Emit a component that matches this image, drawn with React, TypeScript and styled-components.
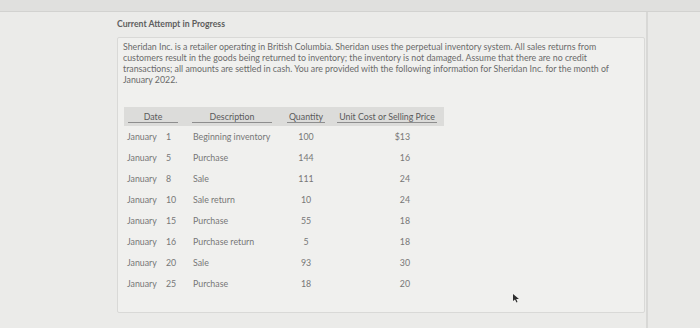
import { createGlobalStyle, styled } from 'styled-components';

const GlobalStyle = createGlobalStyle`
  html, body {
    margin: 0;
    padding: 0;
    background: #e8e8e6;
    font-family: Lato, "Open Sans", sans-serif;
    color: #6c6c6c;
  }
`;

const Screen = styled.div`
  width: 700px;
  height: 328px;
  display: flex;
  flex-direction: column;
  overflow: hidden;
`;

const TopBar = styled.div`
  height: 11px;
  background: #e0e0de;
  border-bottom: 1px solid #d2d2d0;
`;

const Body = styled.div`
  flex: 1;
  display: flex;
`;

const Main = styled.div`
  width: 648px;
  box-sizing: border-box;
  padding: 5px 1px 0 117px;
  background: #ebebe9;
  border-right: 2px solid #d8d8d6;
`;

const Side = styled.div`
  flex: 1;
  background: #e9e9e7;
`;

const Heading = styled.div`
  font-size: 8.7px;
  font-weight: bold;
  color: #5e5e5e;
  height: 14px;
  line-height: 14px;
  margin-bottom: 6px;
`;

const Card = styled.div`
  border: 1px solid #d9d9d7;
  border-radius: 2px;
  background: #f0f0ee;
  height: 276px;
  box-sizing: border-box;
  padding: 3px 10px 0 5px;
`;

const Intro = styled.p`
  margin: 0 0 22px;
  font-size: 8.8px;
  line-height: 11px;
  white-space: nowrap;
  color: #6a6a6a;
`;

const Table = styled.div`
  width: 320px;
  margin-left: 1px;
`;

const columns = '58px 100px 48px 114px';

const HeadRow = styled.div`
  display: grid;
  grid-template-columns: ${columns};
  height: 19px;
  align-items: center;
  background: #dcdcda;
`;

const HeadCell = styled.div<{ $w: number }>`
  display: flex;
  justify-content: center;
  span {
    display: inline-block;
    width: ${(p) => p.$w}px;
    text-align: center;
    font-size: 8.8px;
    line-height: 11px;
    white-space: nowrap;
    color: #5a5a5a;
    border-bottom: 1px solid #8e8e8e;
  }
`;

const Row = styled.div`
  display: grid;
  grid-template-columns: ${columns};
  height: 21px;
  align-items: center;
  font-size: 8.8px;
  color: #777;
`;

const DateCell = styled.div`
  display: flex;
  padding-left: 3px;
  span:first-child {
    width: 39px;
  }
`;

const DescCell = styled.div`
  padding-left: 11px;
  white-space: nowrap;
`;

const QtyCell = styled.div`
  text-align: center;
`;

const PriceCell = styled.div`
  text-align: right;
  padding-right: 34px;
`;

const Cursor = styled.svg`
  position: absolute;
  left: 512px;
  top: 293px;
`;

const rows = [
  ['January', '1', 'Beginning inventory', '100', '$13'],
  ['January', '5', 'Purchase', '144', '16'],
  ['January', '8', 'Sale', '111', '24'],
  ['January', '10', 'Sale return', '10', '24'],
  ['January', '15', 'Purchase', '55', '18'],
  ['January', '16', 'Purchase return', '5', '18'],
  ['January', '20', 'Sale', '93', '30'],
  ['January', '25', 'Purchase', '18', '20'],
];

export default function App() {
  return (
    <Screen>
      <GlobalStyle />
      <TopBar />
      <Body>
        <Main>
          <Heading>Current Attempt in Progress</Heading>
          <Card>
            <Intro>
              Sheridan Inc. is a retailer operating in British Columbia. Sheridan uses the perpetual inventory system. All sales returns from
              <br />
              customers result in the goods being returned to inventory; the inventory is not damaged. Assume that there are no credit
              <br />
              transactions; all amounts are settled in cash. You are provided with the following information for Sheridan Inc. for the month of
              <br />
              January 2022.
            </Intro>
            <Table>
              <HeadRow>
                <HeadCell $w={50}><span>Date</span></HeadCell>
                <HeadCell $w={80}><span>Description</span></HeadCell>
                <HeadCell $w={38}><span>Quantity</span></HeadCell>
                <HeadCell $w={100}><span>Unit Cost or Selling Price</span></HeadCell>
              </HeadRow>
              {rows.map((r) => (
                <Row key={r[0] + r[1]}>
                  <DateCell>
                    <span>{r[0]}</span>
                    <span>{r[1]}</span>
                  </DateCell>
                  <DescCell>{r[2]}</DescCell>
                  <QtyCell>{r[3]}</QtyCell>
                  <PriceCell>{r[4]}</PriceCell>
                </Row>
              ))}
            </Table>
          </Card>
        </Main>
        <Side />
      </Body>
      <Cursor width="8" height="10" viewBox="0 0 8 10">
        <path d="M1 1 L1 8 L3 6.5 L4.5 9.5 L5.5 9 L4.2 6 L7 6 Z" fill="#2e2e2e" />
      </Cursor>
    </Screen>
  );
}
